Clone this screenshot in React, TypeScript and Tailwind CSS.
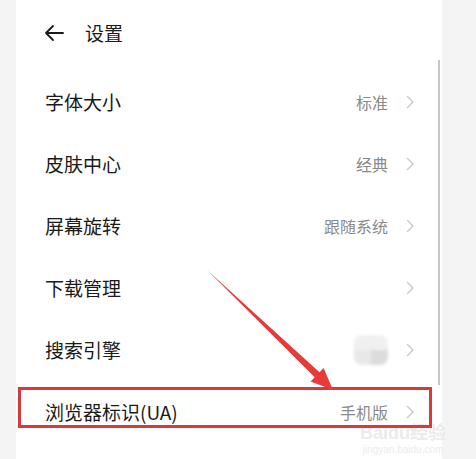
import React from 'react'

interface Row {
  label: string
  value?: string
  icon?: boolean
}

const rows: Row[] = [
  { label: '字体大小', value: '标准' },
  { label: '皮肤中心', value: '经典' },
  { label: '屏幕旋转', value: '跟随系统' },
  { label: '下载管理' },
  { label: '搜索引擎', icon: true },
  { label: '浏览器标识(UA)', value: '手机版' },
]

function Chevron() {
  return (
    <svg width="9" height="14" viewBox="0 0 9 14" fill="none" className="ml-[18px]">
      <path d="M1.5 1.5 L7 7 L1.5 12.5" stroke="#c9c9c9" strokeWidth="1.4" strokeLinecap="round" strokeLinejoin="round" />
    </svg>
  )
}

export default function App() {
  return (
    <div
      className="relative w-[476px] h-[459px] overflow-hidden bg-[#f4f4f4]"
      style={{ fontFamily: '"Noto Sans CJK SC", "Noto Sans", sans-serif' }}
    >
      <div className="ml-[16px] w-[426px] h-full bg-white">
        {/* header */}
        <div className="flex h-[66px] items-center pl-[28px]">
          <svg width="20" height="18" viewBox="0 0 20 18" fill="none">
            <path d="M19 9 H2 M9 2 L2 9 L9 16" stroke="#1a1a1a" strokeWidth="1.8" strokeLinecap="round" strokeLinejoin="round" />
          </svg>
          <span className="ml-[21px] text-[19px] text-[#1a1a1a]">设置</span>
        </div>

        <div className="mt-[5px]">
          {rows.map((r) => (
            <div key={r.label} className="flex h-[62px] items-center pl-[29px] pr-[27px]">
              <span className="flex-1 text-[19px] text-[#1a1a1a]">{r.label}</span>
              {r.value && <span className="text-[16px] text-[#8a8a8a]">{r.value}</span>}
              {r.icon && (
                <div className="flex h-[30px] w-[34px] flex-col overflow-hidden rounded-[8px] blur-[1.5px]">
                  <div className="h-1/2 bg-[#f0f0f0]" />
                  <div className="flex h-1/2">
                    <div className="w-1/2 bg-[#e8e8e8]" />
                    <div className="w-1/2 bg-[#dcdcdc]" />
                  </div>
                </div>
              )}
              <Chevron />
            </div>
          ))}
        </div>
      </div>

      {/* scrollbar */}
      <div className="absolute left-[438px] top-[60px] h-[325px] w-[2px] bg-[#c6c6c6]" />

      {/* watermark */}
      <div className="absolute left-[360px] top-[424px] flex flex-col items-center leading-none text-[#ebebeb]">
        <span className="text-[18px] font-bold" style={{ fontFamily: '"Liberation Sans", "Noto Sans CJK SC", sans-serif' }}>
          Baidu经验
        </span>
        <span className="mt-[3px] text-[10px]" style={{ fontFamily: '"Liberation Sans", sans-serif' }}>
          jingyan.baidu.com
        </span>
      </div>

      {/* highlight box */}
      <div className="absolute left-[18px] top-[387px] h-[41px] w-[414px] border-[3px] border-[#d83a3c]" />

      {/* annotation arrow */}
      <svg className="absolute left-0 top-0" width="476" height="459" viewBox="0 0 476 459">
        <polygon
          points="207,270 319.5,372.3 323.6,368 333,390 310.6,381.6 314.7,377.3"
          fill="#e63b3b"
        />
      </svg>
    </div>
  )
}
